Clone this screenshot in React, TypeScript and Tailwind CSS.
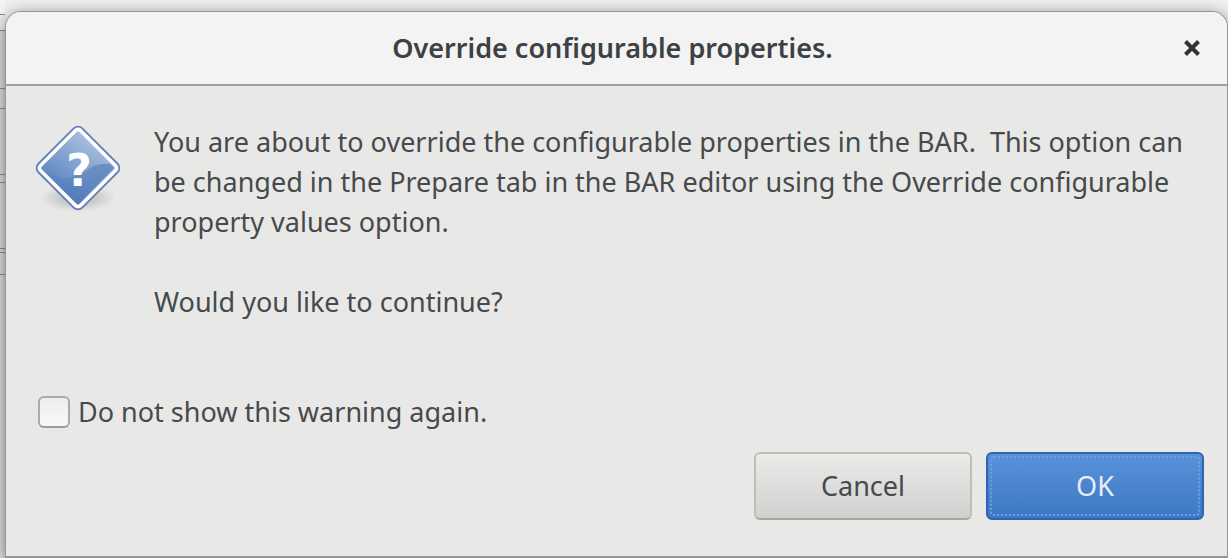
import React from "react";

const FONT = "font-['Noto_Sans','Open_Sans',sans-serif]";

function QuestionIcon() {
  return (
    <svg viewBox="0 0 88 92" className="h-[92px] w-[88px] shrink-0" aria-hidden="true">
      <defs>
        <linearGradient id="face" gradientUnits="userSpaceOnUse" x1="36" y1="8" x2="54" y2="84">
          <stop offset="0" stopColor="#b0c5e3" />
          <stop offset="0.5" stopColor="#7f9fcf" />
          <stop offset="1" stopColor="#4a78b8" />
        </linearGradient>
        <linearGradient id="lower" x1="0" y1="0" x2="1" y2="0">
          <stop offset="0" stopColor="#4673b3" stopOpacity="0.15" />
          <stop offset="1" stopColor="#4673b3" stopOpacity="0.6" />
        </linearGradient>
        <radialGradient id="shade">
          <stop offset="0" stopColor="#000" stopOpacity="0.24" />
          <stop offset="1" stopColor="#000" stopOpacity="0" />
        </radialGradient>
      </defs>
      <ellipse cx="44" cy="76" rx="38" ry="14" fill="url(#shade)" />
      <rect x="13" y="15" width="62" height="62" rx="6" transform="rotate(45 44 46)" fill="#fff" stroke="#6480ba" strokeWidth="1.8" />
      <rect x="17.5" y="19.5" width="53" height="53" rx="2" transform="rotate(45 44 46)" fill="url(#face)" />
      <path d="M11 50Q34 62 52 49Q62 40 76 42L80 46L44 82Z" fill="url(#lower)" />
      <text x="45" y="64" textAnchor="middle" fontSize="44" fontWeight="700" fill="#fff" fontFamily="DejaVu Sans, sans-serif">
        ?
      </text>
    </svg>
  );
}

function CloseIcon() {
  return (
    <svg viewBox="0 0 18 18" className="size-[18px]" aria-hidden="true">
      <path d="M2.5 2.5L15.5 15.5M15.5 2.5L2.5 15.5" stroke="#2e3436" strokeWidth="4" />
    </svg>
  );
}

function BackgroundEdge() {
  return (
    <div className="flex w-[5px] shrink-0 flex-col bg-gradient-to-r from-[#dcdcdc] to-[#d0d0d0]" aria-hidden="true">
      <div className="h-[14px] bg-[#f4f4f4]" />
      <div className="h-4 border-t border-[#8b8b8b] bg-[#eeeeee]" />
      <div className="h-[58px] border-t border-[#8b8b8b]" />
      <div className="h-5 border-t border-[#8b8b8b]" />
      <div className="h-[66px] border-t border-[#8b8b8b]" />
      <div className="h-2 border-t border-[#8b8b8b]" />
      <div className="h-[66px] border-t border-[#8b8b8b]" />
      <div className="h-1 border-t border-[#8b8b8b]" />
      <div className="h-[22px] border-t border-[#8b8b8b]" />
      <div className="flex-1 border-t border-[#8b8b8b]" />
    </div>
  );
}

export default function App() {
  return (
    <div className={`flex min-h-screen bg-[#f0f0f0] text-[27px] leading-10 text-[#464a4c] ${FONT}`}>
      <BackgroundEdge />
      <div className="flex min-w-0 flex-1 flex-col pt-[11px]">
        <section
          role="dialog"
          aria-labelledby="dialog-title"
          className="flex flex-1 flex-col rounded-t-2xl border border-b-2 border-[#959595] bg-[#e8e8e6] shadow-[0_2px_16px_rgba(0,0,0,0.4)]"
        >
          <header className="flex h-[74px] items-center justify-end rounded-t-[15px] border-b-2 border-[#a0a09e] bg-[#f3f3f3] pr-[26px] pl-9">
            <h1 id="dialog-title" className="flex-1 text-center text-[27px] font-semibold text-[#3c4143]">
              Override configurable properties.
            </h1>
            <button type="button" aria-label="Close" className="flex items-center">
              <CloseIcon />
            </button>
          </header>

          <div className="flex items-start gap-8 px-7 pt-9">
            <QuestionIcon />
            <p className="whitespace-pre-line">
              You are about to override the configurable properties in the BAR.&nbsp; This option can{"\n"}
              be changed in the Prepare tab in the BAR editor using the Override configurable{"\n"}
              property values option.{"\n\n"}
              Would you like to continue?
            </p>
          </div>

          <div className="mt-[70px] flex items-center gap-2 px-8">
            <input
              id="hide-warning"
              type="checkbox"
              className="size-8 appearance-none rounded-md border-2 border-[#aaaaa7] border-b-[#9c9c99] bg-gradient-to-b from-[#eeeeee] to-[#f8f8f8] checked:from-[#5992d8] checked:to-[#3d78c5]"
            />
            <label htmlFor="hide-warning">Do not show this warning again.</label>
          </div>

          <div className="mt-5 flex justify-end gap-[14px] px-[23px]">
            <button
              type="button"
              className="h-[68px] w-[218px] rounded-md border-2 border-[#bdbdba] border-b-[#a6a6a3] bg-gradient-to-b from-[#ebebea] to-[#d0d0cf]"
            >
              Cancel
            </button>
            <button
              type="button"
              className="h-[68px] w-[218px] rounded-md border-2 border-[#2e65ad] bg-gradient-to-b from-[#5992d8] to-[#3d78c5] p-[2px] text-[#e8eef5]"
            >
              <span className="flex h-full items-center justify-center rounded-sm border-2 border-dotted border-[#6fa0de]">OK</span>
            </button>
          </div>
        </section>
      </div>
    </div>
  );
}
